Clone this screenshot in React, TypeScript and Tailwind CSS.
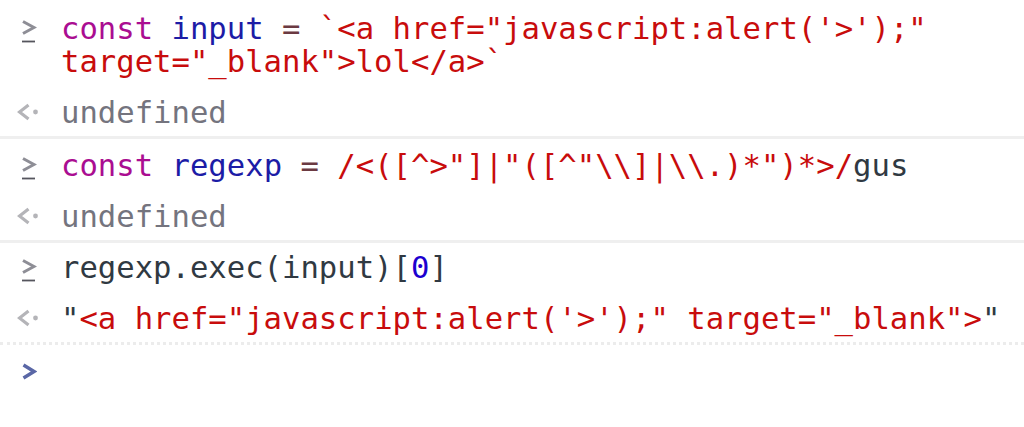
import React, { FC, ReactNode } from "react";

const KW = "text-[#aa0d91]";
const VAR = "text-[#1c1ca6]";
const STR = "text-[#c80c0c]";
const OP = "text-[#6b3a42]";
const TXT = "text-[#303942]";
const NUM = "text-[#1c00cf]";

const PromptIcon: FC<{ active?: boolean }> = ({ active }) =>
  active ? (
    <svg width="16" height="17" viewBox="0 0 16 17" className="mt-[8px] ml-[21px]">
      <polyline
        points="2.5,2 13,8.5 2.5,15"
        fill="none"
        stroke="#5a67a6"
        strokeWidth="3.4"
      />
    </svg>
  ) : (
    <svg width="16" height="26" viewBox="0 0 16 26" className="mt-[8px] ml-[21px]">
      <polyline
        points="2,1.5 13,7.5 2,13.5"
        fill="none"
        stroke="#8e8e96"
        strokeWidth="3"
      />
      <line x1="1" y1="21.5" x2="14" y2="21.5" stroke="#55555d" strokeWidth="1.8" />
    </svg>
  );

const ResultIcon: FC = () => (
  <svg width="22" height="18" viewBox="0 0 22 18" className="mt-[7px] ml-[17px]">
    <polyline points="11.5,2 2.5,9 11.5,16" fill="none" stroke="#b4b4b8" strokeWidth="3.2" />
    <circle cx="18.5" cy="9" r="2.4" fill="#b4b4b8" />
  </svg>
);

const Line: FC<{ icon?: ReactNode; children: ReactNode }> = ({ icon, children }) => (
  <div className="flex h-[33px]">
    <div className="w-[61px] shrink-0">{icon}</div>
    <div className="whitespace-pre leading-[33px]">{children}</div>
  </div>
);

const Group: FC<{ children: ReactNode; top: string; dotted?: boolean }> = ({
  children,
  top,
  dotted,
}) => (
  <div
    className={
      top +
      " pb-[7px] border-b-[3px] " +
      (dotted ? "border-[#ececec] border-dotted" : "border-[#efefef]")
    }
  >
    {children}
  </div>
);

export default function App() {
  return (
    <div
      className="w-[1024px] h-[427px] bg-white overflow-hidden text-[30.6px]"
      style={{ fontFamily: '"DejaVu Sans Mono", Menlo, monospace' }}
    >
      <Group top="pt-[12px]">
        <Line icon={<PromptIcon />}>
          <span className={KW}>const</span> <span className={VAR}>input</span>{" "}
          <span className={OP}>=</span>{" "}
          <span className={STR}>{"`<a href=\"javascript:alert('>');\""}</span>
        </Line>
        <Line>
          <span className={STR}>{"target=\"_blank\">lol</a>`"}</span>
        </Line>
        <div className="h-[18px]" />
        <Line icon={<ResultIcon />}>
          <span className="text-[#74747e]">undefined</span>
        </Line>
      </Group>

      <Group top="pt-[10px]">
        <Line icon={<PromptIcon />}>
          <span className={KW}>const</span> <span className={VAR}>regexp</span>{" "}
          <span className={OP}>=</span>{" "}
          <span className={STR}>{'/<([^>"]|"([^"\\\\]|\\\\.)*")*>/'}</span>
          <span className={TXT}>gus</span>
        </Line>
        <div className="h-[18px]" />
        <Line icon={<ResultIcon />}>
          <span className="text-[#74747e]">undefined</span>
        </Line>
      </Group>

      <Group top="pt-[8px]" dotted>
        <Line icon={<PromptIcon />}>
          <span className={TXT}>regexp.exec(input)[</span>
          <span className={NUM}>0</span>
          <span className={TXT}>]</span>
        </Line>
        <div className="h-[18px]" />
        <Line icon={<ResultIcon />}>
          <span className={TXT}>"</span>
          <span className={STR}>{"<a href=\"javascript:alert('>');\" target=\"_blank\">"}</span>
          <span className={TXT}>"</span>
        </Line>
      </Group>

      <div className="pt-[10px]">
        <Line icon={<PromptIcon active />}>{""}</Line>
      </div>
    </div>
  );
}
